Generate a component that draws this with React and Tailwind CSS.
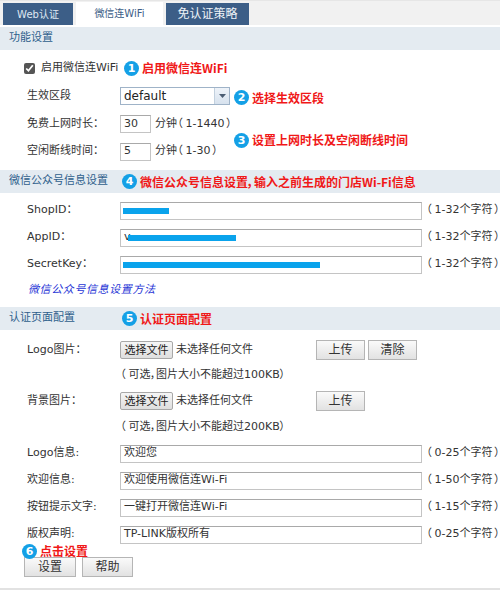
import React from 'react';

const font = { fontFamily: '"DejaVu Sans", "Noto Sans CJK SC", sans-serif' };

const Badge = ({ n }) => (
  <span className="inline-flex items-center justify-center w-[15px] h-[15px] rounded-full bg-[#14a0e6] text-white text-[11px] font-bold leading-none shrink-0">
    {n}
  </span>
);

const Note = ({ n, children, className = '' }) => (
  <span className={`inline-flex items-center gap-[3px] ${className}`}>
    <Badge n={n} />
    <span className="text-[#f01818] text-[12px] font-bold whitespace-nowrap" style={{ fontFamily: '"Noto Sans CJK SC", sans-serif' }}>
      {children}
    </span>
  </span>
);

const SectionHead = ({ title, children }) => (
  <div className="flex items-center h-[23px] bg-[#e4ebf1] pl-[9px] text-[11px] text-[#2f5f8c]">
    <span className="w-[113px] shrink-0 whitespace-nowrap">{title}</span>
    {children}
  </div>
);

const Row = ({ label, h, children }) => (
  <div className="flex items-center pl-[27px] whitespace-nowrap" style={{ height: h }}>
    <span className="w-[93px] shrink-0 text-[11px] text-[#333]">{label}</span>
    {children}
  </div>
);

const TextBox = ({ w = 'w-[302px]', value, children }) => (
  <div className={`relative shrink-0 h-[18px] ${w} border border-[#c4c4c4] border-t-[#a9a9a9] bg-white flex items-center px-[3px] text-[11px] text-[#333] overflow-hidden`}>
    {value}
    {children}
  </div>
);

// hint text with the narrow brackets spaced out a little
const Hint = ({ pre = '', range }) => (
  <span className="ml-[4px] text-[11px] text-[#333] whitespace-nowrap">
    {pre}（<span className="ml-[3px]">{range}</span>
    <span className="ml-[2px]">）</span>
  </span>
);

const Btn = ({ w, children }) => (
  <button className={`${w} h-[20px] shrink-0 border border-[#b5b5b5] bg-gradient-to-b from-[#fafafa] to-[#e2e2e2] text-[12px] text-[#333] leading-none`}>
    {children}
  </button>
);

const FileBtn = () => (
  <div className="flex items-center w-[196px] shrink-0">
    <button className="w-[53px] h-[18px] border border-[#a8a8a8] rounded-[2px] bg-gradient-to-b from-[#f6f6f6] to-[#dedede] text-[11px] text-[#222] leading-none">
      选择文件
    </button>
    <span className="ml-[3px] text-[11px] text-[#333]">未选择任何文件</span>
  </div>
);

const Redact = ({ left, width }) => (
  <span className="absolute top-[5px] h-[6px] bg-[#0aa3ec]" style={{ left, width }} />
);

export default function App() {
  return (
    <div className="relative w-[500px] h-[591px] bg-white overflow-hidden [font-feature-settings:'palt']" style={font}>
      {/* tab strip */}
      <div className="flex items-end h-[25px] bg-[#f1f1f1] border-t border-[#e6e6e6] pl-[3px] gap-[3px]">
        <div className="w-[70px] h-[22px] bg-[#3c5e87] flex items-center justify-center text-[10px] text-[#dfe8f2]">Web认证</div>
        <div className="w-[87px] h-[23px] bg-white flex items-center justify-center text-[10px] text-[#3c5e87]">微信连WiFi</div>
        <div className="w-[83px] h-[22px] bg-[#3c5e87] flex items-center justify-center text-[12px] text-[#eef3f8]">免认证策略</div>
      </div>
      <div className="h-[2px]" />

      <SectionHead title="功能设置" />
      <div className="h-[4px]" />
      <div className="flex items-center h-[28px] pl-[24px] whitespace-nowrap">
        <input type="checkbox" defaultChecked className="w-[11px] h-[11px] m-0 accent-[#555]" />
        <span className="ml-[6px] w-[83px] shrink-0 text-[11px] text-[#333]">启用微信连WiFi</span>
        <Note n="1">启用微信连WiFi</Note>
      </div>
      <Row label="生效区段" h={28}>
        <div className="flex items-center w-[110px] h-[18px] shrink-0 border border-[#9fb3c8] bg-white">
          <span className="flex-1 pl-[3px] text-[12px] text-[#222]">default</span>
          <span className="w-[15px] h-full bg-gradient-to-b from-[#eef3f9] to-[#d7e2ee] border-l border-[#c2d0de] flex items-center justify-center">
            <svg width="7" height="4" viewBox="0 0 7 4"><path d="M0 0h7L3.5 4z" fill="#4b5d73" /></svg>
          </span>
        </div>
        <span className="ml-[4px]"><Note n="2">选择生效区段</Note></span>
      </Row>
      <Row label="免费上网时长：" h={28}>
        <TextBox w="w-[31px]" value="30" />
        <Hint pre="分钟" range="1-1440" />
      </Row>
      <Row label="空闲断线时间：" h={27}>
        <TextBox w="w-[31px]" value="5" />
        <Hint pre="分钟" range="1-30" />
      </Row>
      <div className="h-[5px]" />

      <SectionHead title="微信公众号信息设置">
        <Note n="4">微信公众号信息设置，输入之前生成的门店Wi-Fi信息</Note>
      </SectionHead>
      <div className="h-[4px]" />
      <Row label="ShopID：" h={27}>
        <TextBox value="">
          <Redact left={2} width={46} />
        </TextBox>
        <Hint range="1-32个字符" />
      </Row>
      <Row label="AppID：" h={27}>
        <TextBox value="v">
          <Redact left={7} width={108} />
        </TextBox>
        <Hint range="1-32个字符" />
      </Row>
      <Row label="SecretKey：" h={27}>
        <TextBox value="">
          <Redact left={2} width={197} />
        </TextBox>
        <Hint range="1-32个字符" />
      </Row>
      <div className="flex items-center h-[24px] pl-[28px]">
        <span className="italic text-[11px] text-[#1f35d6] tracking-[0.6px]">微信公众号信息设置方法</span>
      </div>
      <div className="h-[5px]" />

      <SectionHead title="认证页面配置">
        <Note n="5">认证页面配置</Note>
      </SectionHead>
      <div className="h-[7px]" />
      <Row label="Logo图片：" h={26}>
        <FileBtn />
        <div className="flex gap-[3px]">
          <Btn w="w-[49px]">上传</Btn>
          <Btn w="w-[49px]">清除</Btn>
        </div>
      </Row>
      <Row label="" h={25}>
        <span className="text-[11px] text-[#333]">（<span className="ml-[3px]">可选，图片大小不能超过100KB</span>）</span>
      </Row>
      <Row label="背景图片：" h={26}>
        <FileBtn />
        <Btn w="w-[49px]">上传</Btn>
      </Row>
      <Row label="" h={26}>
        <span className="text-[11px] text-[#333]">（<span className="ml-[3px]">可选，图片大小不能超过200KB</span>）</span>
      </Row>
      <Row label="Logo信息:" h={27}>
        <TextBox value="欢迎您" />
        <Hint range="0-25个字符" />
      </Row>
      <Row label="欢迎信息:" h={27}>
        <TextBox value="欢迎使用微信连Wi-Fi" />
        <Hint range="1-50个字符" />
      </Row>
      <Row label="按钮提示文字:" h={27}>
        <TextBox value="一键打开微信连Wi-Fi" />
        <Hint range="1-15个字符" />
      </Row>
      <Row label="版权声明:" h={27}>
        <TextBox value="TP-LINK版权所有" />
        <Hint range="0-25个字符" />
      </Row>
      <div className="h-[9px]" />
      <div className="flex gap-[6px] pl-[24px]">
        <Btn w="w-[52px]">设置</Btn>
        <Btn w="w-[51px]">帮助</Btn>
      </div>
      <div className="mt-[11px] h-[2px] bg-[#e2e2e2]" />

      {/* callouts placed over the form */}
      <Note n="3" className="absolute left-[234px] top-[131px]">设置上网时长及空闲断线时间</Note>
      <Note n="6" className="absolute left-[22px] top-[542px]">点击设置</Note>
    </div>
  );
}
